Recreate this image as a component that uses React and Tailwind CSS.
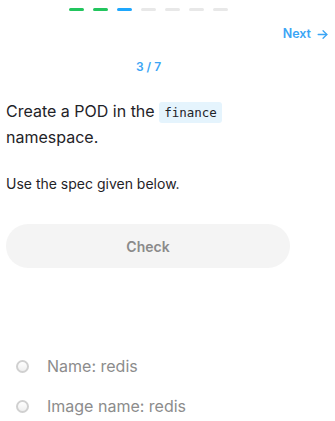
import React from "react";

const steps = ["done", "done", "current", "todo", "todo", "todo", "todo"];
const specs = ["Name: redis", "Image name: redis"];

export default function App() {
  return (
    <div className="w-[335px] h-[421px] bg-white overflow-hidden font-['Inter','Noto_Sans',sans-serif] text-[#1f2328]">
      {/* progress */}
      <div className="w-[297px] flex justify-center gap-[9px] pt-[8px]">
        {steps.map((s, i) => (
          <div
            key={i}
            className={
              "w-[15px] h-[3px] rounded-full " +
              (s === "done" ? "bg-[#22c55e]" : s === "current" ? "bg-[#1ea7fd]" : "bg-[#e8e8e8]")
            }
          />
        ))}
      </div>

      <div className="flex justify-end pr-[6px] mt-[15px]">
        <button className="flex items-center gap-[5px] text-[12.5px] leading-4 font-semibold text-[#3ba5f5]">
          Next
          <svg width="13" height="13" viewBox="0 0 24 24" fill="none" stroke="currentColor" strokeWidth="2.4" strokeLinecap="round" strokeLinejoin="round">
            <path d="M4 12h16" />
            <path d="M13 5l7 7-7 7" />
          </svg>
        </button>
      </div>

      <div className="w-[297px] text-center mt-[17px] text-[12px] leading-4 font-semibold text-[#3ba5f5]">3 / 7</div>

      <div className="px-[6px] w-[296px]">
        <p className="mt-[24px] text-[16px] leading-[24px]">
          Create a POD in the{" "}
          <code className="bg-[#e5f4fd] rounded-[3px] px-[5px] py-[3px] text-[12.5px] font-['DejaVu_Sans_Mono',monospace]">finance</code>{" "}
          namespace.
        </p>
        <p className="mt-[25px] text-[14px] leading-5">Use the spec given below.</p>

        <button className="mt-[30px] w-full h-[44px] rounded-full bg-[#f4f4f4] text-[14px] font-semibold text-[#8a8a8a]">
          Check
        </button>
      </div>

      <ul className="mt-[78px] pl-[16px]">
        {specs.map((s) => (
          <li key={s} className="flex items-center h-[40px] gap-[18px]">
            <span className="w-[13px] h-[13px] rounded-full border-2 border-[#d0d0d0] bg-gradient-to-b from-white to-[#efefef]" />
            <span className="text-[16px] text-[#8c8c8c]">{s}</span>
          </li>
        ))}
      </ul>
    </div>
  );
}
